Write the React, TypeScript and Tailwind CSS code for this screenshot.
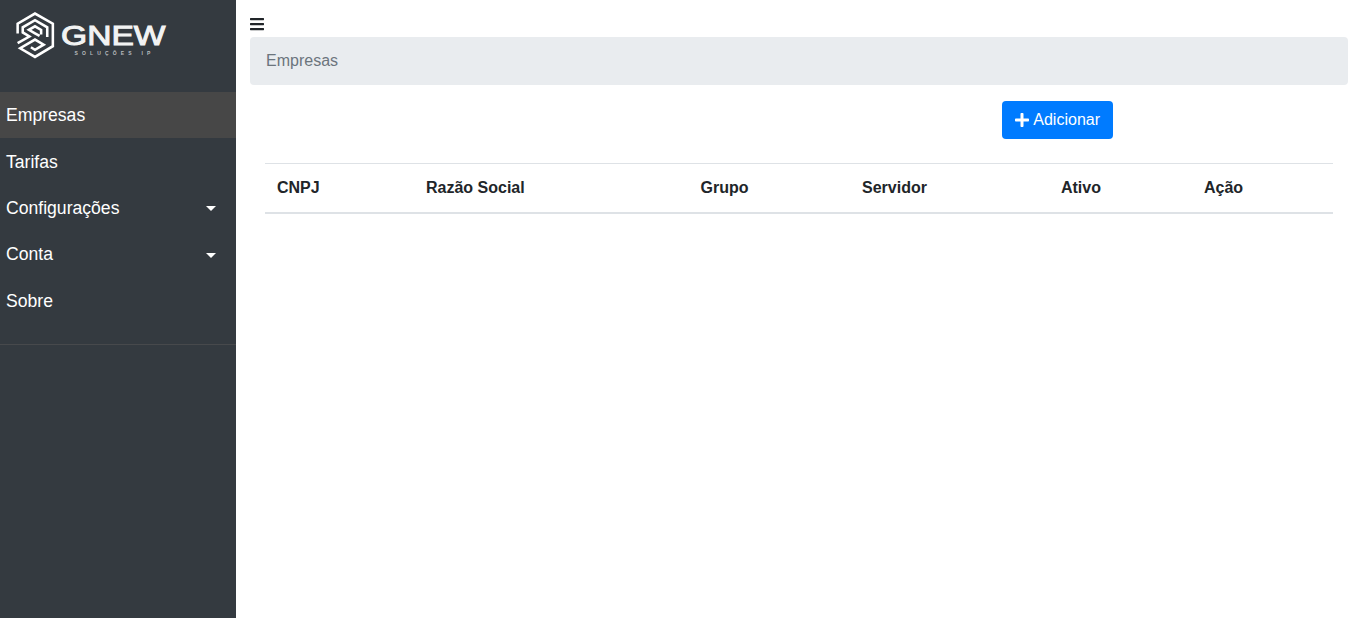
import React from 'react';
import { FaBars, FaPlus } from 'react-icons/fa';

const Logo = () => {
  return (
    <div className="flex items-start">
      <svg width="41" height="49" viewBox="0 0 40 48" fill="none" stroke="white" strokeWidth="2.5" className="mt-px ml-[15px]">
        <path d="M2.5 21 V11.5 L19.5 1.5 L37 11.5 V33.5 L19.5 44 L5 35.5 L19.5 27 L28 32 L19.5 37 L15.5 34.5" />
        <path d="M31.5 24.5 V15 L19.5 8 L7.5 15 V20 L14 24 L2.5 30.5" />
        <path d="M25.5 22 V17.5 L19.5 14 L13.5 17.5 L19.5 21 L24 23.5" />
      </svg>
      <div className="ml-[5px] flex w-[107px] flex-col items-center pt-[11px]">
        <span className="w-full origin-left scale-x-[1.2] text-[28px] leading-[28px] whitespace-nowrap text-[#f2f3f3] [-webkit-text-stroke:1px_#f2f3f3]">GNEW</span>
        <span className="text-[5px] leading-[6px] font-bold tracking-[4.15px] whitespace-nowrap text-[#b9bcbf]">SOLUÇÕES IP</span>
      </div>
    </div>
  );
};

const NavItem = ({ label, active, caret }: { label: string; active?: boolean; caret?: boolean }) => {
  return (
    <div className={active ? 'mb-[0.4px] flex h-[46px] items-center justify-between bg-[#474747] pr-[20px] pl-[6px]' : 'flex h-[46.4px] items-center justify-between pr-[20px] pl-[6px]'}>
      <span className="text-[17.6px] text-white">{label}</span>
      {caret && <span className="mt-[1px] h-0 w-0 border-x-[5px] border-t-[5px] border-x-transparent border-t-white" />}
    </div>
  );
};

const columns = [
  { label: 'CNPJ', width: 'w-[149px]' },
  { label: 'Razão Social', width: 'w-[274.6px]' },
  { label: 'Grupo', width: 'w-[161.4px]' },
  { label: 'Servidor', width: 'w-[199px]' },
  { label: 'Ativo', width: 'w-[143px]' },
  { label: 'Ação', width: 'w-[141px]' },
];

const App = () => {
  return (
    <div className="flex min-h-[618px] font-['Liberation_Sans',Arial,sans-serif] text-[16px] text-[#212529]">
      <aside className="w-[236px] shrink-0 bg-[#343a40]">
        <div className="flex h-[92.2px] items-start pt-[11px]">
          <Logo />
        </div>
        <nav className="border-b border-[#47494c] pb-[20px]">
          <NavItem label="Empresas" active />
          <NavItem label="Tarifas" />
          <NavItem label="Configurações" caret />
          <NavItem label="Conta" caret />
          <NavItem label="Sobre" />
        </nav>
      </aside>
      <main className="flex-1 pr-[7px] pl-[14px]">
        <div className="flex h-[37px] items-end pb-[5px]">
          <FaBars size={16} color="#212529" className="-ml-px" />
        </div>
        <div className="flex h-[48px] items-center rounded bg-[#e9ecef] px-4 text-[#6c757d]">Empresas</div>
        <div className="mt-4 flex justify-end pr-[235px]">
          <button className="flex h-[38px] items-center gap-[3px] rounded bg-[#007bff] pr-[13px] pl-3 text-white">
            <FaPlus size={16} />
            Adicionar
          </button>
        </div>
        <table className="mt-6 ml-[15px] w-[1068px] table-fixed border-collapse">
          <thead>
            <tr className="border-t border-b-2 border-t-[#dee2e6] border-b-[#dee2e6]">
              {columns.map((col) => (
                <th key={col.label} className={`${col.width} h-[49px] px-3 text-left font-bold`}>
                  {col.label}
                </th>
              ))}
            </tr>
          </thead>
        </table>
      </main>
    </div>
  );
};

export default App;
